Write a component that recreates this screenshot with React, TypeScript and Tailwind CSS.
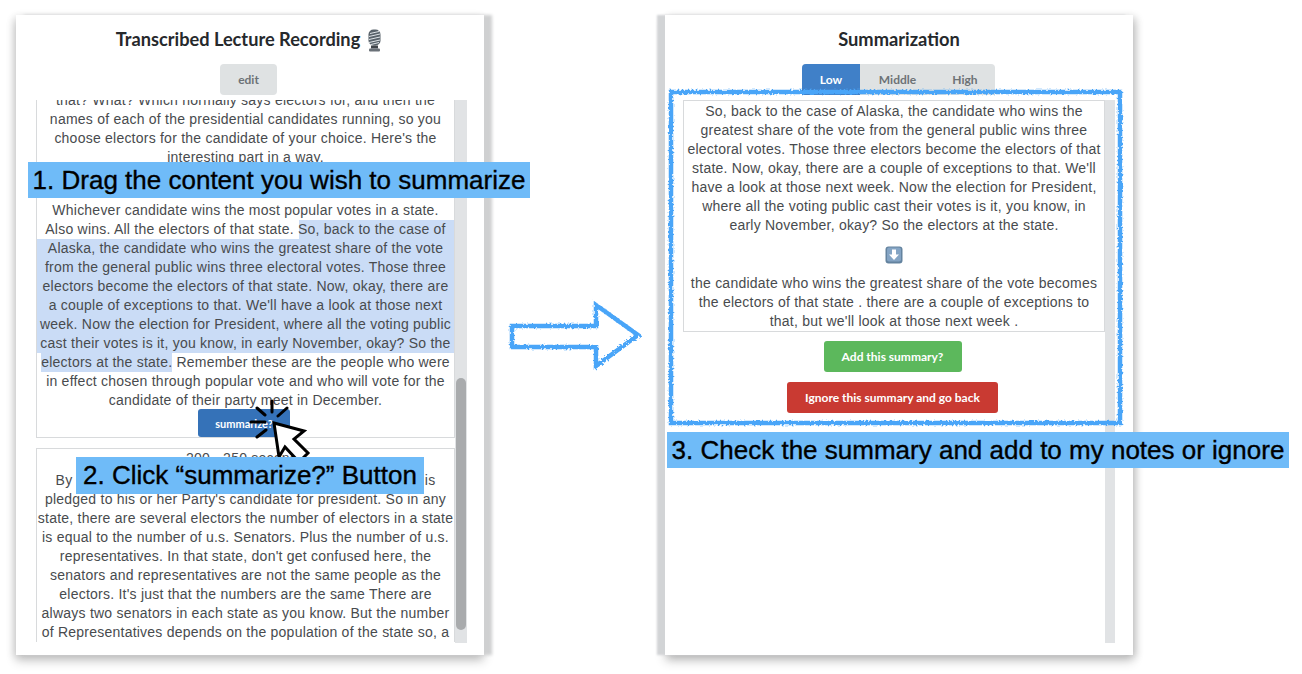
const lato = 'font-["Lato",sans-serif]';
const body = 'font-["Liberation_Sans",Arial,sans-serif] tracking-[0.23px]';

const topLines = [
  "that? What? Which normally says electors for, and then the",
  "names of each of the presidential candidates running, so you",
  "choose electors for the candidate of your choice. Here's the",
  "interesting part in a way.",
];

const selectedLines = [
  "Alaska, the candidate who wins the greatest share of the vote",
  "from the general public wins three electoral votes. Those three",
  "electors become the electors of that state. Now, okay, there are",
  "a couple of exceptions to that. We'll have a look at those next",
  "week. Now the election for President, where all the voting public",
  "cast their votes is it, you know, in early November, okay? So the",
];

const thirdLines = [
  "By law, each and every elector in the electoral college so is",
  "pledged to his or her Party's candidate for president. So in any",
  "state, there are several electors the number of electors in a state",
  "is equal to the number of u.s. Senators. Plus the number of u.s.",
  "representatives. In that state, don't get confused here, the",
  "senators and representatives are not the same people as the",
  "electors. It's just that the numbers are the same There are",
  "always two senators in each state as you know. But the number",
  "of Representatives depends on the population of the state so, a",
];

const originalLines = [
  "So, back to the case of Alaska, the candidate who wins the",
  "greatest share of the vote from the general public wins three",
  "electoral votes. Those three electors become the electors of that",
  "state. Now, okay, there are a couple of exceptions to that. We'll",
  "have a look at those next week. Now the election for President,",
  "where all the voting public cast their votes is it, you know, in",
  "early November, okay? So the electors at the state.",
];

const summaryLines = [
  "the candidate who wins the greatest share of the vote becomes",
  "the electors of that state . there are a couple of exceptions to",
  "that, but we'll look at those next week .",
];

function Lines({ lines }: { lines: string[] }) {
  return (
    <>
      {lines.map((line) => (
        <div key={line} className="whitespace-nowrap">
          {line}
        </div>
      ))}
    </>
  );
}

function MicIcon() {
  return (
    <svg width="19" height="23" viewBox="0 0 19 23" className="ml-[5px] inline-block">
      <rect x="3.5" y="0.5" width="12" height="16" rx="5" fill="#59636b" />
      <path d="M5 4.5l9-2M4 7.5l11-2.5M4 10.5l11-2.5M4 13.5l11-2.5M6 15.5l8-2" stroke="#dfe4e8" strokeWidth="1" />
      <rect x="6" y="16.5" width="7" height="3" fill="#3f444a" />
      <rect x="4" y="19.5" width="11" height="3" rx="1" fill="#6a7178" />
    </svg>
  );
}

function DownArrowIcon() {
  return (
    <svg width="18" height="18" viewBox="0 0 18 18">
      <rect x="0.5" y="0.5" width="17" height="17" rx="3" fill="#64839f" />
      <rect x="2" y="1.5" width="14" height="14" rx="2" fill="#84a4c4" />
      <path d="M7 3.5h4v5h3l-5 5.5-5-5.5h3z" fill="#ffffff" />
    </svg>
  );
}

function Scrollbar({ thumb }: { thumb?: boolean }) {
  return (
    <div className="w-[12px] shrink-0 bg-[#e1e3e5] pt-[278px] pl-px pr-px">
      {thumb && <div className="h-[252px] w-[10px] rounded-[5px] bg-[#a9abad]" />}
    </div>
  );
}

function LeftCard() {
  return (
    <section className="h-[640px] w-[468px] bg-white flex flex-col shadow-[8px_0_3px_#cfd0d1,-2px_2px_8px_rgba(0,0,0,0.12),0_6px_10px_rgba(0,0,0,0.2)]">
      <h2 className={`${lato} mt-[13px] h-[24px] flex items-center justify-center text-[18.2px] font-bold text-[#26292c]`}>
        Transcribed Lecture Recording
        <MicIcon />
      </h2>
      <button className={`${lato} mt-[12px] self-center ml-[-3px] h-[31px] w-[57px] rounded-[4px] bg-[#dfe2e3] text-[12px] font-bold text-[#6d7276]`}>
        edit
      </button>
      <div className={`${body} mt-[5px] ml-[20px] flex h-[543px] w-[431px] overflow-hidden text-[14px] leading-[19px] text-center text-[#484b4e]`}>
        <div className="w-[419px] shrink-0 -mt-[9px]">
          <div className="border-x border-b border-[#d8dadc]">
            <Lines lines={topLines} />
          </div>
          <div className="mt-[10px] border border-[#d8dadc]">
            <div className="h-[18px]">150 - 200 seconds</div>
            <div className="mt-[4px]">
              <div>Whichever candidate wins the most popular votes in a state.</div>
              <div className="whitespace-nowrap bg-[linear-gradient(to_right,transparent_262px,#cadcf6_262px)]">
                Also wins. All the electors of that state. So, back to the case of
              </div>
              <div className="bg-[#cadcf6]">
                <Lines lines={selectedLines} />
              </div>
              <div className="whitespace-nowrap">
                <span className="bg-[#cadcf6] py-[2px]">electors at the state.</span> Remember these are the people who were
              </div>
              <div className="whitespace-nowrap">in effect chosen through popular vote and who will vote for the</div>
              <div>candidate of their party meet in December.</div>
            </div>
            <button className={`${lato} -mt-px block h-[28px] w-[92px] ml-[161px] rounded-[3px] bg-[#3572b8] text-[11px] tracking-normal font-bold text-white`}>
              summarize?
            </button>
          </div>
          <div className="mt-[10px] border-x border-t border-[#d8dadc]">
            <div className="h-[18px]">200 - 250 seconds</div>
            <div className="mt-[4px]">
              <Lines lines={thirdLines} />
            </div>
          </div>
        </div>
        <Scrollbar thumb />
      </div>
    </section>
  );
}

function RightCard() {
  return (
    <section className="h-[640px] w-[468px] bg-white flex flex-col shadow-[-8px_0_2px_#d2d4d6,3px_2px_8px_rgba(0,0,0,0.16),0_6px_10px_rgba(0,0,0,0.2)]">
      <h2 className={`${lato} mt-[13px] h-[24px] flex items-center justify-center text-[18.3px] font-bold text-[#26292c]`}>
        Summarization
      </h2>
      <div className={`${lato} mt-[12px] ml-[137px] flex h-[31px] w-[193px] overflow-hidden rounded-t-[4px] bg-[#dfe2e3] text-[12px] font-bold text-[#6d7276]`}>
        <div className="flex w-[58px] items-center justify-center bg-[#4080c8] text-white">Low</div>
        <div className="flex w-[75px] items-center justify-center">Middle</div>
        <div className="flex w-[60px] items-center justify-center">High</div>
      </div>
      <div className="mt-[5px] ml-[18px] flex h-[543px] w-[432px] overflow-hidden">
        <div className="w-[422px] shrink-0 flex flex-col items-center">
          <div className={`${body} h-[232px] w-full border border-[#d8dadc] pt-px text-[14px] leading-[19px] text-center text-[#484b4e]`}>
            <Lines lines={originalLines} />
            <div className="flex h-[39px] items-center justify-center">
              <DownArrowIcon />
            </div>
            <Lines lines={summaryLines} />
          </div>
          <button className={`${lato} mt-[9px] mr-[3px] h-[31px] w-[138px] rounded-[3px] bg-[#5cb85c] text-[12px] font-bold text-white`}>
            Add this summary?
          </button>
          <button className={`${lato} mt-[10px] mr-[3px] h-[31px] w-[211px] rounded-[3px] bg-[#c93a32] text-[12px] font-bold text-white`}>
            Ignore this summary and go back
          </button>
        </div>
        <div className="w-[10px] shrink-0 bg-[#e1e3e5]" />
      </div>
    </section>
  );
}

function Banner({ className, children }: { className: string; children: string }) {
  return (
    <div className={`font-["Liberation_Sans",Arial,sans-serif] absolute flex items-center justify-center whitespace-nowrap bg-[#6fbbf8] text-[26px] text-black [-webkit-text-stroke:0.35px_#000] ${className}`}>
      {children}
    </div>
  );
}

function Overlays() {
  return (
    <svg width="1302" height="674" viewBox="0 0 1302 674" className="absolute left-0 top-0" fill="none">
      <defs>
        <filter id="rough" x="-5%" y="-5%" width="110%" height="110%">
          <feTurbulence type="fractalNoise" baseFrequency="0.5" numOctaves="2" seed="4" />
          <feDisplacementMap in="SourceGraphic" scale="4" />
        </filter>
      </defs>
      <g filter="url(#rough)" stroke="#4aa5f8" strokeWidth="4.5">
        <path d="M512 326H596V305L638 335L596 366V347H512Z" strokeLinejoin="miter" />
        <rect x="671" y="92" width="449" height="331" />
      </g>
      <g stroke="#000" strokeWidth="3" strokeLinecap="round">
        <path d="M272 401V412M287 408L278 416M251 422H265M257 408L265 415M257 437L266 430" />
      </g>
      <path d="M274 423L304 431L294 439L308 453L299 462L285 447L279 457Z" fill="#fff" stroke="#000" strokeWidth="3" strokeLinejoin="miter" />
    </svg>
  );
}

export default function App() {
  return (
    <div className="relative h-[674px] w-[1302px] overflow-hidden bg-white">
      <div className="flex gap-[181px] pl-[16px] pt-[15px]">
        <LeftCard />
        <RightCard />
      </div>
      <Overlays />
      <Banner className="left-[28px] top-[162px] h-[36px] w-[502px]">1. Drag the content you wish to summarize</Banner>
      <Banner className="left-[76px] top-[457px] h-[37px] w-[348px]">2. Click “summarize?” Button</Banner>
      <Banner className="left-[667px] top-[432px] h-[36px] w-[622px]">3. Check the summary and add to my notes or ignore</Banner>
    </div>
  );
}
